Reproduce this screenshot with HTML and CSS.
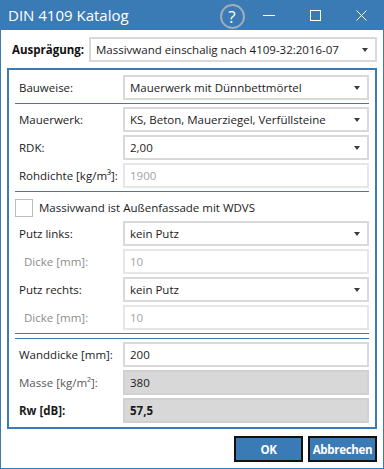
FILE: index.html
```html
<!DOCTYPE html>
<html>
<head>
<meta charset="utf-8">
<link rel="stylesheet" href="styles.css">
</head>
<body>
<div class="window">
  <div class="titlebar">
    <span class="title">DIN 4109 Katalog</span>
    <div class="caption">
      <div class="cap help"><span class="help-ring">?</span></div>
      <div class="cap"><svg width="12" height="12" viewBox="0 0 12 12"><line x1="0" y1="6.5" x2="12" y2="6.5" stroke="#fff" stroke-width="1"/></svg></div>
      <div class="cap"><svg width="11" height="11" viewBox="0 0 11 11"><rect x="0.5" y="0.5" width="10" height="10" fill="none" stroke="#fff" stroke-width="1"/></svg></div>
      <div class="cap"><svg width="11" height="11" viewBox="0 0 11 11"><path d="M0.5 0.5 L10.5 10.5 M10.5 0.5 L0.5 10.5" stroke="#fff" stroke-width="1"/></svg></div>
    </div>
  </div>
  <div class="body">
    <div class="top-row">
      <span class="top-label">Ausprägung:</span>
      <div class="field combo top-combo"><span class="val">Massivwand einschalig nach 4109-32:2016-07</span><span class="arrow"></span></div>
    </div>
    <div class="group">
      <div class="row"><span class="lbl">Bauweise:</span><div class="field combo"><span class="val">Mauerwerk mit Dünnbettmörtel</span><span class="arrow"></span></div></div>
      <div class="sep"></div>
      <div class="row"><span class="lbl">Mauerwerk:</span><div class="field combo"><span class="val">KS, Beton, Mauerziegel, Verfüllsteine</span><span class="arrow"></span></div></div>
      <div class="row"><span class="lbl">RDK:</span><div class="field combo"><span class="val">2,00</span><span class="arrow"></span></div></div>
      <div class="row"><span class="lbl">Rohdichte [kg/m³]:</span><div class="field disabled"><span class="val">1900</span></div></div>
      <div class="sep"></div>
      <div class="check-row"><span class="checkbox"></span><span class="check-text">Massivwand ist Außenfassade mit WDVS</span></div>
      <div class="row"><span class="lbl">Putz links:</span><div class="field combo"><span class="val">kein Putz</span><span class="arrow"></span></div></div>
      <div class="row"><span class="lbl sub">Dicke [mm]:</span><div class="field disabled"><span class="val">10</span></div></div>
      <div class="row"><span class="lbl">Putz rechts:</span><div class="field combo"><span class="val">kein Putz</span><span class="arrow"></span></div></div>
      <div class="row"><span class="lbl sub">Dicke [mm]:</span><div class="field disabled"><span class="val">10</span></div></div>
      <div class="dsep"></div>
      <div class="row"><span class="lbl">Wanddicke [mm]:</span><div class="field edit"><span class="val">200</span></div></div>
      <div class="row"><span class="lbl muted">Masse [kg/m²]:</span><div class="field readonly"><span class="val">380</span></div></div>
      <div class="row"><span class="lbl bold">Rw [dB]:</span><div class="field readonly"><span class="val bold">57,5</span></div></div>
    </div>
    <div class="buttons">
      <button class="btn">OK</button>
      <button class="btn">Abbrechen</button>
    </div>
  </div>
</div>
</body>
</html>
```

FILE: styles.css
```css
html, body {
  margin: 0;
  padding: 0;
  background: #ffffff;
}
body {
  font-family: "Open Sans", "Noto Sans", sans-serif;
  font-size: 11.5px;
  color: #1b1b1b;
}
.window {
  width: 384px;
  height: 469px;
  display: flex;
  flex-direction: column;
}
.titlebar {
  height: 30px;
  background: #3b7bb5;
  display: flex;
  align-items: center;
  justify-content: space-between;
  flex-shrink: 0;
}
.title {
  color: #ffffff;
  font-size: 15px;
  padding-left: 8px;
  padding-bottom: 1px;
}
.caption {
  display: flex;
  height: 30px;
}
.cap {
  width: 46px;
  height: 30px;
  display: flex;
  align-items: center;
  justify-content: center;
}
.cap.help {
  width: 28px;
}
.help-ring {
  width: 21px;
  height: 21px;
  border: 2px solid #a2acb6;
  border-radius: 50%;
  display: flex;
  align-items: center;
  justify-content: center;
  color: #ffffff;
  font-size: 17px;
  line-height: 1;
  margin-top: 3px;
}
.body {
  flex: 1;
  border: 1px solid #3b7bb5;
  border-top: none;
  display: flex;
  flex-direction: column;
  padding: 7px 6px 0 6px;
}
.top-row {
  display: flex;
  align-items: center;
  height: 25px;
}
.top-label {
  font-weight: bold;
  width: 82px;
  padding-left: 5px;
  box-sizing: border-box;
  color: #111;
}
.field {
  box-sizing: border-box;
  height: 25px;
  border: 2px solid #d9d9d9;
  background: #ffffff;
  display: flex;
  align-items: center;
  justify-content: space-between;
  padding: 0 7px 0 5px;
  flex: 1;
  min-width: 0;
}
.top-combo {
  flex: 0 0 288px;
}
.val {
  white-space: nowrap;
  overflow: hidden;
}
.arrow {
  width: 0;
  height: 0;
  border-left: 3.5px solid transparent;
  border-right: 3.5px solid transparent;
  border-top: 4px solid #3c3c3c;
}
.group {
  margin-top: 6px;
  height: 361px;
  box-sizing: border-box;
  border: 2px solid #3b7bb5;
  padding: 5px 6px 0 6px;
  display: flex;
  flex-direction: column;
  gap: 3px;
}
.row {
  display: flex;
  align-items: center;
  height: 25px;
}
.lbl {
  flex: 0 0 108px;
  padding-left: 4px;
  box-sizing: border-box;
  white-space: nowrap;
}
.lbl.sub {
  padding-left: 9px;
  color: #8c8c8c;
}
.lbl.muted {
  color: #585858;
}
.bold {
  font-weight: bold;
}
.sep {
  height: 1px;
  background: #3b7bb5;
}
.dsep {
  height: 6px;
  box-sizing: border-box;
  border-top: 1px solid #3b7bb5;
  border-bottom: 1px solid #3b7bb5;
}
.check-row {
  height: 23px;
  display: flex;
  align-items: center;
  gap: 6px;
}
.checkbox {
  width: 18px;
  height: 18px;
  box-sizing: border-box;
  border: 1px solid #bdbdbd;
  background: #fff;
  margin-top: 2px;
}
.check-text {
  margin-top: 1px;
}
.field.disabled {
  border-color: #e6e6e6;
  color: #a3a3a3;
}
.field.readonly {
  background: #d8d8d8;
  border-color: #d0d0d0;
}
.buttons {
  margin-top: 7px;
  display: flex;
  justify-content: flex-end;
  gap: 5px;
}
.btn {
  width: 69px;
  height: 26px;
  box-sizing: border-box;
  border: 2px solid #111111;
  background: #3b7bb5;
  color: #ffffff;
  font-family: "Open Sans", "Noto Sans", sans-serif;
  font-weight: bold;
  font-size: 11.5px;
  padding: 0;
  margin: 0;
  letter-spacing: -0.3px;
}
```
